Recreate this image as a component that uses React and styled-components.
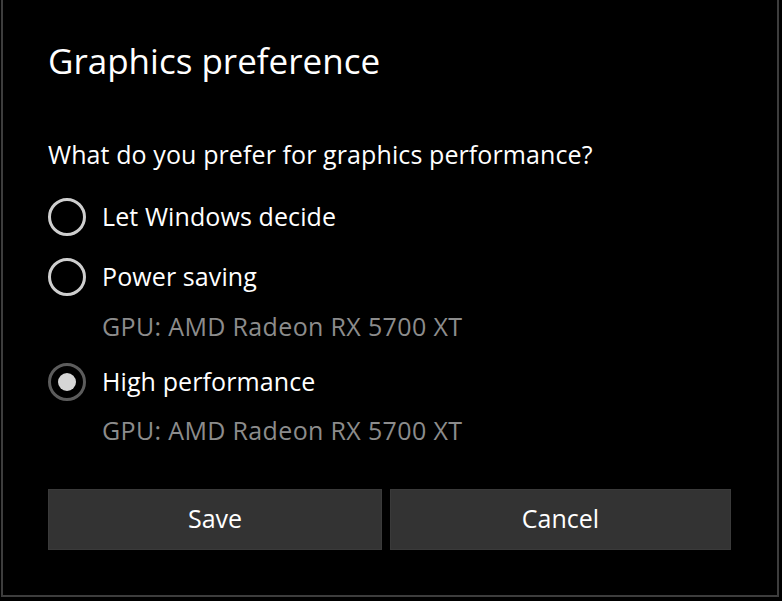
import React from "react";
import styled, { createGlobalStyle } from "styled-components";

const Global = createGlobalStyle`
  html, body { margin: 0; padding: 0; background: #000; }
  body { font-family: "Open Sans", "Noto Sans", sans-serif; color: #fff; }
  #root { width: 782px; height: 601px; background: #000; overflow: hidden; }
`;

const Dialog = styled.div`
  box-sizing: border-box;
  margin-left: 1px;
  width: 778px;
  height: 597px;
  border: 2px solid #3d3d3d;
  border-top: none;
  padding: 41px 45px 0 45px;
  display: flex;
  flex-direction: column;
`;

const Title = styled.h1`
  margin: 0;
  font-size: 35px;
  line-height: 40px;
  font-weight: 400;
  color: #fff;
`;

const Question = styled.p`
  margin: 58px 0 0 0;
  font-size: 25px;
  letter-spacing: 0.1px;
  line-height: 30px;
  color: #fff;
`;

const Options = styled.div`
  margin-top: 27px;
  display: flex;
  flex-direction: column;
`;

const Option = styled.label`
  display: flex;
  align-items: center;
  gap: 16px;
  height: 40px;
  margin-top: ${(p) => (p.$first ? 0 : 20)}px;
  font-size: 25px;
  letter-spacing: 0.1px;
  color: #fff;
`;

const Radio = styled.span`
  box-sizing: border-box;
  width: 38px;
  height: 38px;
  margin-top: 2px;
  border-radius: 50%;
  border: 3px solid ${(p) => (p.$checked ? "#5c5c5c" : "#cfcfcf")};
  display: flex;
  align-items: center;
  justify-content: center;
  flex: none;
  &::after {
    content: "";
    display: ${(p) => (p.$checked ? "block" : "none")};
    width: 18px;
    height: 18px;
    border-radius: 50%;
    background: #d6d6d6;
  }
`;

const Sub = styled.div`
  margin: ${(p) => p.$gap}px 0 0 54px;
  font-size: 25px;
  letter-spacing: 0.35px;
  line-height: 30px;
  color: #8c8c8c;
`;

const Buttons = styled.div`
  margin-top: 44px;
  display: grid;
  grid-template-columns: 334px 341px;
  gap: 8px;
`;

const Button = styled.button`
  box-sizing: border-box;
  height: 61px;
  background: #333;
  border: 1px solid #3a3a3a;
  color: #fff;
  font-family: "Open Sans", "Noto Sans", sans-serif;
  font-size: 25px;
  line-height: 1;
  padding: 0 0 2px 0;
`;

export default function App() {
  return (
    <>
      <Global />
      <Dialog>
        <Title>Graphics preference</Title>
        <Question>What do you prefer for graphics performance?</Question>
        <Options>
          <Option $first>
            <Radio />
            Let Windows decide
          </Option>
          <Option>
            <Radio />
            Power saving
          </Option>
          <Sub $gap={15}>GPU: AMD Radeon RX 5700 XT</Sub>
          <Option>
            <Radio $checked />
            High performance
          </Option>
          <Sub $gap={14}>GPU: AMD Radeon RX 5700 XT</Sub>
        </Options>
        <Buttons>
          <Button>Save</Button>
          <Button>Cancel</Button>
        </Buttons>
      </Dialog>
    </>
  );
}
